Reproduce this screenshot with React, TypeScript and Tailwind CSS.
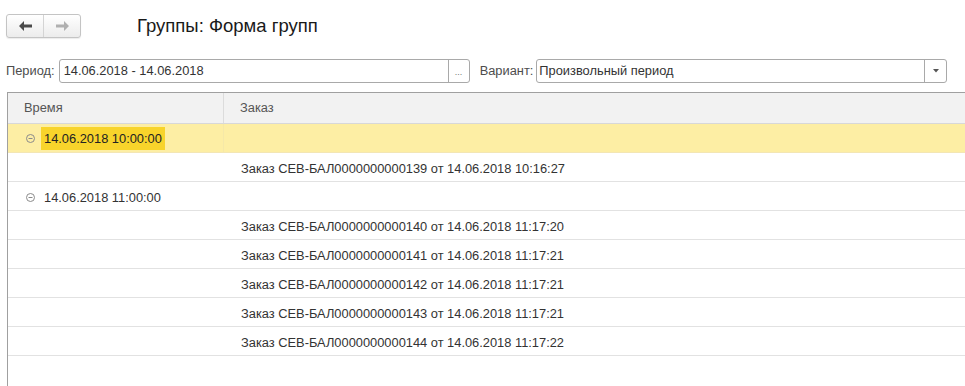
const orders = [
    "Заказ СЕВ-БАЛ0000000000140 от 14.06.2018 11:17:20",
    "Заказ СЕВ-БАЛ0000000000141 от 14.06.2018 11:17:21",
    "Заказ СЕВ-БАЛ0000000000142 от 14.06.2018 11:17:21",
    "Заказ СЕВ-БАЛ0000000000143 от 14.06.2018 11:17:21",
    "Заказ СЕВ-БАЛ0000000000144 от 14.06.2018 11:17:22",
];

const Collapse = () => (
    <svg width="9" height="9" viewBox="0 0 9 9" className="mr-[6px]">
        <circle cx="4.5" cy="4.5" r="4" fill="none" stroke="#8a8a8a" strokeWidth="1" />
        <line x1="2.5" y1="4.5" x2="6.5" y2="4.5" stroke="#8a8a8a" strokeWidth="1" />
    </svg>
);

const Arrow = ({ dir, color }: { dir: "left" | "right"; color: string }) => (
    <svg width="13" height="10" viewBox="0 0 13 10">
        {dir === "left" ? (
            <path d="M0 5 L5 0 L5 3.5 L13 3.5 L13 6.5 L5 6.5 L5 10 Z" fill={color} />
        ) : (
            <path d="M13 5 L8 0 L8 3.5 L0 3.5 L0 6.5 L8 6.5 L8 10 Z" fill={color} />
        )}
    </svg>
);

const App = () => {
    return (
        <div className="w-[965px] h-[386px] bg-white overflow-hidden text-[12.85px] text-[#333] font-['Liberation_Sans',Arial,sans-serif]">
            <div className="flex items-center h-[50px] pl-[6px] pt-[2px]">
                <div className="flex h-[24px] w-[75px] border border-[#c4c4c4] rounded-[3px] bg-gradient-to-b from-white to-[#ececec] shadow-[0_1px_1px_rgba(0,0,0,0.08)]">
                    <div className="flex-1 flex items-center justify-center border-r border-[#d4d4d4]">
                        <Arrow dir="left" color="#4a4a4a" />
                    </div>
                    <div className="flex-1 flex items-center justify-center">
                        <Arrow dir="right" color="#b0b0b0" />
                    </div>
                </div>
                <h1 className="ml-[56px] text-[18.5px] text-[#1a1a1a]">Группы: Форма групп</h1>
            </div>

            <div className="flex items-center h-[26px] mt-[8px] pl-[6px] pr-[18px]">
                <span className="text-[#4d4d4d] mr-[4px]">Период:</span>
                <div className="flex w-[411px] h-[24px] border border-[#a9a9a9] rounded-[3px]">
                    <div className="flex-1 flex items-center pl-[4px] text-[#333]">14.06.2018 - 14.06.2018</div>
                    <div className="w-[21px] border-l border-[#a9a9a9] flex items-center justify-center text-[9px] text-[#777] pt-[3px]">...</div>
                </div>
                <span className="text-[#4d4d4d] ml-[10px] mr-[3px]">Вариант:</span>
                <div className="flex flex-1 h-[24px] border border-[#a9a9a9] rounded-[3px]">
                    <div className="flex-1 flex items-center pl-[2px] text-[#333]">Произвольный период</div>
                    <div className="w-[22px] border-l border-[#a9a9a9] flex items-center justify-center">
                        <svg width="6" height="4" viewBox="0 0 6 4">
                            <path d="M0 0 L6 0 L3 3.5 Z" fill="#555" />
                        </svg>
                    </div>
                </div>
            </div>

            <div className="mt-[8px] ml-[7px] border-l border-t border-[#a0a0a0] h-[300px]">
                <div className="flex h-[31px] bg-[#f2f2f2] border-b border-[#d8d8d8] text-[#555]">
                    <div className="w-[216px] flex items-center pl-[16px] border-r border-[#dcdcdc]">Время</div>
                    <div className="flex-1 flex items-center pl-[16px]">Заказ</div>
                </div>

                <div className="flex h-[29px] bg-[#fdeea4] border-b border-[#f3e6b4]">
                    <div className="w-[216px] flex items-center pl-[18px] border-r border-[#f5e8a8]">
                        <Collapse />
                        <span className="bg-[#f8d42b] h-[23px] flex items-center pt-[1px] px-[3px] text-[#222]">14.06.2018 10:00:00</span>
                    </div>
                    <div className="flex-1" />
                </div>
                <div className="flex h-[29px] border-b border-[#e2e2e2]">
                    <div className="w-[216px]" />
                    <div className="flex-1 flex items-center pl-[17px] pt-[3px]">Заказ СЕВ-БАЛ0000000000139 от 14.06.2018 10:16:27</div>
                </div>
                <div className="flex h-[29px] border-b border-[#e2e2e2]">
                    <div className="w-[216px] flex items-center pl-[18px] pt-[3px]">
                        <Collapse />
                        <span className="px-[3px]">14.06.2018 11:00:00</span>
                    </div>
                    <div className="flex-1" />
                </div>
                {orders.map((o) => (
                    <div key={o} className="flex h-[29px] border-b border-[#e2e2e2]">
                        <div className="w-[216px]" />
                        <div className="flex-1 flex items-center pl-[17px] pt-[3px]">{o}</div>
                    </div>
                ))}
            </div>
        </div>
    );
};

export default App;
